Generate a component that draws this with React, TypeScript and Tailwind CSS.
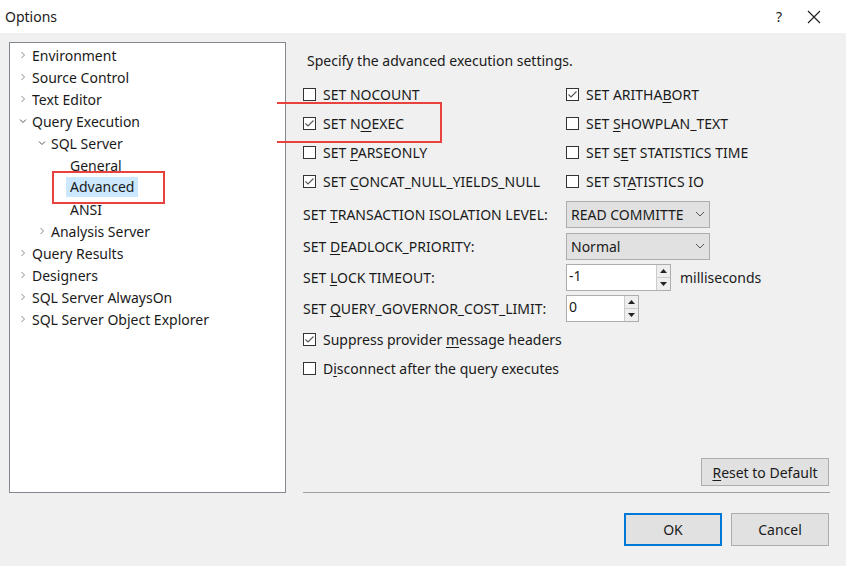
import React from "react";

const U = ({ c }: { c: string }) => <span className="underline underline-offset-2">{c}</span>;

const Chk = ({ on }: { on?: boolean }) => (
  <span className="w-[13px] h-[13px] border border-[#333] bg-white flex items-center justify-center shrink-0">
    {on && (
      <svg width="11" height="11" viewBox="0 0 11 11"><path d="M1.5 5.5 L4 8 L9.5 2.5" fill="none" stroke="#555" strokeWidth="1.1" /></svg>
    )}
  </span>
);

const CB = ({ on, children, w }: { on?: boolean; children: React.ReactNode; w?: string }) => (
  <div className={`flex items-center gap-[7px] h-[29px] ${w ?? ""}`}>
    <Chk on={on} />
    <span>{children}</span>
  </div>
);

const Chev = ({ open }: { open?: boolean }) => (
  <svg width="8" height="8" viewBox="0 0 8 8" className="shrink-0">
    {open ? <path d="M1 2.5 L4 5.5 L7 2.5" fill="none" stroke="#555" /> : <path d="M2.5 1 L5.5 4 L2.5 7" fill="none" stroke="#888" />}
  </svg>
);

const Node = ({ lvl, chev, open, children, sel }: { lvl: number; chev?: boolean; open?: boolean; children: React.ReactNode; sel?: boolean }) => (
  <div className="flex items-center h-[22px]" style={{ paddingLeft: 9 + lvl * 19 }}>
    <span className="w-[13px] flex">{chev && <Chev open={open} />}</span>
    <span className={sel ? "bg-[#cce8ff] px-[4px] -ml-[4px] leading-[20px]" : ""}>{children}</span>
  </div>
);

const Spin = () => (
  <div className="flex flex-col w-[14px] border-l border-[#ccc] h-full">
    <div className="flex-1 flex items-center justify-center border-b border-[#ccc] bg-[#eee]"><svg width="7" height="4"><path d="M0 4 L3.5 0 L7 4Z" fill="#222" /></svg></div>
    <div className="flex-1 flex items-center justify-center bg-[#eee]"><svg width="7" height="4"><path d="M0 0 L3.5 4 L7 0Z" fill="#222" /></svg></div>
  </div>
);

const Drop = ({ v }: { v: string }) => (
  <div className="w-[144px] h-[27px] border border-[#adadad] bg-[#e1e1e1] flex items-center justify-between px-[4px]">
    <span>{v}</span>
    <svg width="10" height="6"><path d="M1 1 L5 5 L9 1" fill="none" stroke="#555" /></svg>
  </div>
);

export default function App() {
  return (
    <div className="w-[846px] h-[566px] bg-[#f0f0f0] text-[14px] text-[#1a1a1a] relative overflow-hidden" style={{ fontFamily: '"Noto Sans", "Open Sans", sans-serif' }}>
      <div className="h-[33px] bg-white flex items-center justify-between pl-[5px]">
        <span>Options</span>
        <div className="flex items-center">
          <span className="w-[56px] text-center">?</span>
          <svg width="14" height="14" className="mr-[25px]"><path d="M1 1 L13 13 M13 1 L1 13" stroke="#222" strokeWidth="1.2" /></svg>
        </div>
      </div>
      <div className="flex pt-[9px]">
        <div className="ml-[9px] w-[277px] h-[451px] border border-[#828790] bg-white pt-[1px]">
          <Node lvl={0} chev>Environment</Node>
          <Node lvl={0} chev>Source Control</Node>
          <Node lvl={0} chev>Text Editor</Node>
          <Node lvl={0} chev open>Query Execution</Node>
          <Node lvl={1} chev open>SQL Server</Node>
          <Node lvl={2}>General</Node>
          <Node lvl={2} sel>Advanced</Node>
          <Node lvl={2}>ANSI</Node>
          <Node lvl={1} chev>Analysis Server</Node>
          <Node lvl={0} chev>Query Results</Node>
          <Node lvl={0} chev>Designers</Node>
          <Node lvl={0} chev>SQL Server AlwaysOn</Node>
          <Node lvl={0} chev>SQL Server Object Explorer</Node>
        </div>
        <div className="ml-[17px] w-[527px] flex flex-col">
          <div className="pl-[4px] pt-[8px] h-[38px]">Specify the advanced execution settings.</div>
          <div className="flex">
            <div className="w-[263px]">
              <CB>SET <U c="N" />OCOUNT</CB>
              <CB on>SET N<U c="O" />EXEC</CB>
              <CB>SET <U c="P" />ARSEONLY</CB>
              <CB on>SET <U c="C" />ONCAT_NULL_YIELDS_NULL</CB>
            </div>
            <div>
              <CB on>SET ARITHA<U c="B" />ORT</CB>
              <CB>SET <U c="S" />HOWPLAN_TEXT</CB>
              <CB>SET S<U c="E" />T STATISTICS TIME</CB>
              <CB>SET ST<U c="A" />TISTICS IO</CB>
            </div>
          </div>
          <div className="flex items-center h-[32px] mt-[2px]">
            <span className="w-[263px]">SET <U c="T" />RANSACTION ISOLATION LEVEL:</span>
            <Drop v="READ COMMITTE" />
          </div>
          <div className="flex items-center h-[32px]">
            <span className="w-[263px]">SET <U c="D" />EADLOCK_PRIORITY:</span>
            <Drop v="Normal" />
          </div>
          <div className="flex items-center h-[31px]">
            <span className="w-[263px]">SET <U c="L" />OCK TIMEOUT:</span>
            <div className="w-[105px] h-[27px] border border-[#adadad] bg-white flex">
              <span className="flex-1 pl-[2px] leading-[22px]">-1</span>
              <Spin />
            </div>
            <span className="ml-[9px]">milliseconds</span>
          </div>
          <div className="flex items-center h-[31px]">
            <span className="w-[263px]">SET <U c="Q" />UERY_GOVERNOR_COST_LIMIT:</span>
            <div className="w-[73px] h-[27px] border border-[#adadad] bg-white flex">
              <span className="flex-1 pl-[2px] leading-[22px]">0</span>
              <Spin />
            </div>
          </div>
          <div className="mt-[1px]">
            <CB on>Suppress provider <U c="m" />essage headers</CB>
            <CB>D<U c="i" />sconnect after the query executes</CB>
          </div>
          <div className="flex-1" />
          <div className="flex justify-end pr-[1px] mb-[6px]">
            <button className="w-[128px] h-[28px] border border-[#adadad] bg-[#e1e1e1]"><U c="R" />eset to Default</button>
          </div>
          <div className="h-px bg-[#a0a0a0] mr-[0px]" />
        </div>
      </div>
      <div className="flex justify-end gap-[9px] pr-[17px] mt-[20px]">
        <button className="w-[98px] h-[33px] border-2 border-[#0078d7] bg-[#e1e1e1]">OK</button>
        <button className="w-[98px] h-[33px] border border-[#adadad] bg-[#e1e1e1]">Cancel</button>
      </div>
      <div className="absolute left-[52px] top-[171px] w-[113px] h-[33px] border-2 border-[#e8413e]" />
      <div className="absolute left-[277px] top-[102px] w-[165px] h-[41px] border-2 border-[#e8413e] border-l-0" />
    </div>
  );
}
